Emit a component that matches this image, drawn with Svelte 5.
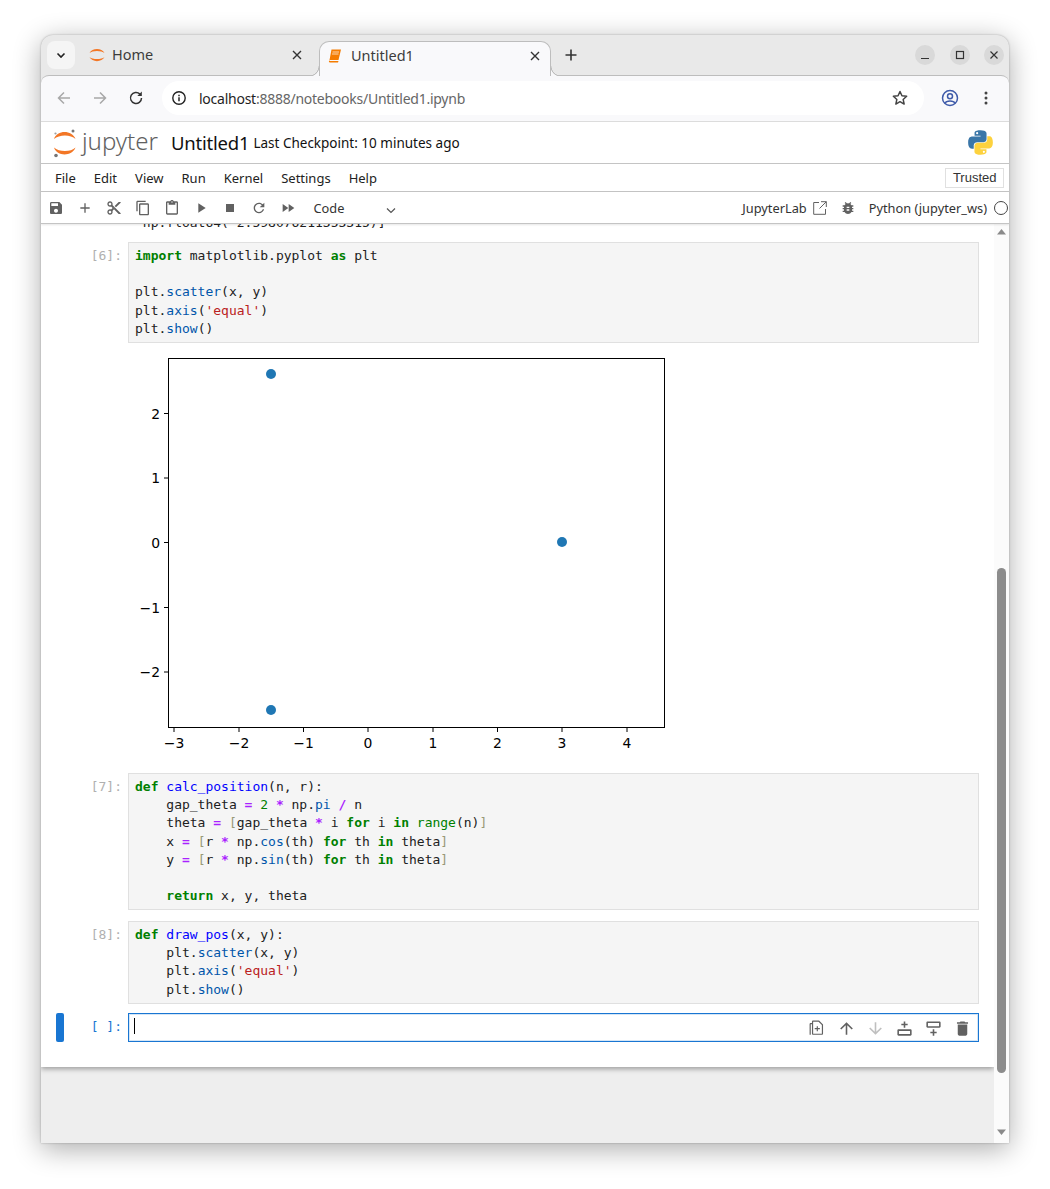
<script>
  const menus = ['File', 'Edit', 'View', 'Run', 'Kernel', 'Settings', 'Help'];
  const tools = [
    'M17 3H5c-1.11 0-2 .9-2 2v14c0 1.1.89 2 2 2h14c1.1 0 2-.9 2-2V7l-4-4zm-5 16c-1.66 0-3-1.34-3-3s1.34-3 3-3 3 1.34 3 3-1.34 3-3 3zm3-10H5V5h10v4z',
    'M19 13h-6v6h-2v-6H5v-2h6V5h2v6h6v2z',
    'M9.64 7.64c.23-.5.36-1.05.36-1.64 0-2.21-1.79-4-4-4S2 3.79 2 6s1.79 4 4 4c.59 0 1.14-.13 1.64-.36L10 12l-2.36 2.36C7.14 14.13 6.59 14 6 14c-2.21 0-4 1.79-4 4s1.79 4 4 4 4-1.79 4-4c0-.59-.13-1.14-.36-1.64L12 14l7 7h3v-1L9.64 7.64zM6 8c-1.1 0-2-.89-2-2s.9-2 2-2 2 .89 2 2-.9 2-2 2zm0 12c-1.1 0-2-.89-2-2s.9-2 2-2 2 .89 2 2-.9 2-2 2zm6-7.5c-.28 0-.5-.22-.5-.5s.22-.5.5-.5.5.22.5.5-.22.5-.5.5zM19 3l-6 6 2 2 7-7V3z',
    'M16 1H4c-1.1 0-2 .9-2 2v14h2V3h12V1zm3 4H8c-1.1 0-2 .9-2 2v14c0 1.1.9 2 2 2h11c1.1 0 2-.9 2-2V7c0-1.1-.9-2-2-2zm0 16H8V7h11v14z',
    'M19 2h-4.18C14.4.84 13.3 0 12 0c-1.3 0-2.4.84-2.82 2H5c-1.1 0-2 .9-2 2v16c0 1.1.9 2 2 2h14c1.1 0 2-.9 2-2V4c0-1.1-.9-2-2-2zm-7 0c.55 0 1 .45 1 1s-.45 1-1 1-1-.45-1-1 .45-1 1-1zm7 18H5V4h2v3h10V4h2v16z',
    'M8 5v14l11-7z',
    'M6 6h12v12H6z',
    'M17.65 6.35C16.2 4.9 14.21 4 12 4c-4.42 0-7.99 3.58-7.99 8s3.57 8 7.99 8c3.73 0 6.84-2.55 7.73-6h-2.08c-.82 2.33-3.04 4-5.65 4-3.31 0-6-2.69-6-6s2.69-6 6-6c1.66 0 3.14.69 4.22 1.78L13 11h7V4l-2.35 2.35z',
    'M4 18l8.5-6L4 6v12zm9-12v12l8.5-6L13 6z'
  ];
  const cellTools = [
    { d: 'M14 2H6.5C5.7 2 5 2.7 5 3.5V5H3.5C2.7 5 2 5.7 2 6.500V20h1.500V6.500H5v12c0 .8.7 1.500 1.500 1.500h11c.8 0 1.500-.7 1.500-1.500V7l-5-5zM6.500 3.500h6.800l4.200 4.200v10.800h-11V3.500zM11 9v2.500H8.500V13H11v2.500h1.500V13H15v-1.500h-2.500V9H11z', o: 1 },
    { d: 'M4 12l1.410 1.410L11 7.830V20h2V7.830l5.580 5.590L20 12l-8-8-8 8z', o: 1 },
    { d: 'M20 12l-1.410-1.410L13 16.170V4h-2v12.170l-5.580-5.590L4 12l8 8 8-8z', o: 0.4 },
    { d: 'M11 3h2v3h3v2h-3v3h-2V8H8V6h3V3zM4.500 13h15c.8 0 1.500.7 1.500 1.500v5c0 .8-.7 1.500-1.500 1.500h-15C3.700 21 3 20.300 3 19.500v-5C3 13.700 3.700 13 4.500 13zM5 15v4h14v-4H5z', o: 1 },
    { d: 'M4.500 3h15c.8 0 1.500.7 1.500 1.500v5c0 .8-.7 1.500-1.500 1.500h-15C3.700 11 3 10.300 3 9.500v-5C3 3.700 3.700 3 4.500 3zM5 5v4h14V5H5zM11 13h2v3h3v2h-3v3h-2v-3H8v-2h3v-3z', o: 1 },
    { d: 'M6 19c0 1.100.9 2 2 2h8c1.100 0 2-.9 2-2V7H6v12zM19 4h-3.500l-1-1h-5l-1 1H5v2h14V4z', o: 1 }
  ];
  const xt = [[174, '−3'], [239, '−2'], [303.5, '−1'], [368, '0'], [433, '1'], [497.5, '2'], [562, '3'], [627, '4']];
  const yt = [[413.500, '2'], [478, '1'], [542.500, '0'], [607.500, '−1'], [672, '−2']];
  const dots = [[271, 374], [562, 542], [271, 710]];
</script>

<div class="page">
  <div class="win">
    <div class="tabstrip">
      <div class="tabsearch"><svg width="12" height="12" viewBox="0 0 12 12"><path d="M2.500 4.500 6 8l3.500-3.500" fill="none" stroke="#222" stroke-width="1.600"/></svg></div>
      <div class="tab home">
        <svg width="18" height="18" viewBox="0 0 18 18"><path d="M1.500 7C4 1.500 14 1.500 16.500 7C13.500 4.200 4.500 4.200 1.500 7zM1.500 11C4 16.500 14 16.500 16.500 11C13.500 13.800 4.500 13.800 1.500 11z" fill="#f37726"/></svg>
        <span class="tabtitle">Home</span>
        <svg class="x" width="12" height="12" viewBox="0 0 12 12"><path d="M2 2l8 8M10 2l-8 8" stroke="#333" stroke-width="1.400"/></svg>
      </div>
      <div class="tab active">
        <svg width="16" height="16" viewBox="0 0 16 16"><path d="M4.500 1.500H14L11.500 12H2.500zM2 12.500C1.600 14 2.300 14.500 3.500 14.500H11L11.500 13H3.200" fill="#f57c00"/><path d="M5.500 4h6.500M5 6h6.500" stroke="#fff" stroke-width=".7"/></svg>
        <span class="tabtitle">Untitled1</span>
        <svg class="x" width="12" height="12" viewBox="0 0 12 12"><path d="M2 2l8 8M10 2l-8 8" stroke="#333" stroke-width="1.400"/></svg>
      </div>
      <svg class="plus" width="14" height="14" viewBox="0 0 14 14"><path d="M7 1.500v11M1.500 7h11" stroke="#333" stroke-width="1.600"/></svg>
      <div class="winbtns">
        <div class="wb"><svg width="10" height="10" viewBox="0 0 10 10"><path d="M1 8.500h8" stroke="#333" stroke-width="1.200"/></svg></div>
        <div class="wb"><svg width="10" height="10" viewBox="0 0 10 10"><rect x="1.500" y="1.500" width="7" height="7" fill="none" stroke="#333" stroke-width="1.200"/></svg></div>
        <div class="wb"><svg width="10" height="10" viewBox="0 0 10 10"><path d="M1.500 1.500l7 7M8.500 1.500l-7 7" stroke="#333" stroke-width="1.200"/></svg></div>
      </div>
    </div>

    <div class="navbar">
      <svg class="nav" width="16" height="16" viewBox="0 0 16 16"><path d="M14 8H2.500M8 2.500 2.500 8 8 13.500" fill="none" stroke="#a8a8a8" stroke-width="1.500"/></svg>
      <svg class="nav" width="16" height="16" viewBox="0 0 16 16"><path d="M2 8h11.500M8 2.500 13.500 8 8 13.500" fill="none" stroke="#a8a8a8" stroke-width="1.500"/></svg>
      <svg class="nav" width="16" height="16" viewBox="0 0 16 16"><path d="M13.500 8A5.500 5.500 0 1 1 11.900 4.100" fill="none" stroke="#333" stroke-width="1.500"/><path d="M13.800 1.500v4.500H9.300z" fill="#333"/></svg>
      <div class="omni">
        <svg width="16" height="16" viewBox="0 0 16 16"><circle cx="8" cy="8" r="6.200" fill="none" stroke="#222" stroke-width="1.400"/><path d="M8 7.200v4M8 4.800v1.400" stroke="#222" stroke-width="1.500"/></svg>
        <span class="url"><span class="host">localhost</span>:8888/notebooks/Untitled1.ipynb</span>
        <svg class="star" width="18" height="18" viewBox="0 0 18 18"><path d="M9 2.500l1.950 4.300 4.700.5-3.500 3.150 1 4.600L9 12.700l-4.150 2.350 1-4.600L2.350 7.300l4.700-.5z" fill="none" stroke="#444" stroke-width="1.500" stroke-linejoin="round"/></svg>
      </div>
      <svg class="prof" width="18" height="18" viewBox="0 0 18 18"><circle cx="9" cy="9" r="7.500" fill="none" stroke="#3f5ba9" stroke-width="1.500"/><circle cx="9" cy="7.200" r="2.500" fill="none" stroke="#3f5ba9" stroke-width="1.500"/><path d="M3.800 14.200C5.500 11.300 12.500 11.300 14.200 14.200" fill="none" stroke="#3f5ba9" stroke-width="1.500"/></svg>
      <svg class="dots" width="4" height="14" viewBox="0 0 4 14"><circle cx="2" cy="2" r="1.500" fill="#444"/><circle cx="2" cy="7" r="1.500" fill="#444"/><circle cx="2" cy="12" r="1.500" fill="#444"/></svg>
    </div>

    <div class="jhead">
      <svg class="jlogo" width="24" height="30" viewBox="0 0 24 30">
        <path d="M1 11C4 1.700 19 1.700 22.500 11C18 6.300 6 6.300 1 11zM1 19.500C4 28.800 19 28.800 22.500 19.500C18 24.200 6 24.200 1 19.500z" fill="#f37726"/>
        <circle cx="20" cy="3" r="1.500" fill="#767677"/><circle cx="2.500" cy="5.500" r="1.100" fill="#9e9e9e"/><circle cx="3" cy="27.500" r="1.800" fill="#767677"/>
      </svg>
      <span class="jword">jupyter</span>
      <span class="nbtitle">Untitled1</span>
      <span class="ckpt">Last Checkpoint: 10 minutes ago</span>
      <svg class="py" width="25" height="25" viewBox="0 0 110 111">
        <path d="M54.900.9C26.900.9 28.600 13 28.600 13v12.600h26.700v3.800H18S.1 27.400.1 55.600s15.600 27.200 15.600 27.200H25V69.700s-.5-15.600 15.400-15.600h26.500s14.900.2 14.900-14.400V15.600S84.100.9 54.900.9zM40.100 9.400a4.800 4.800 0 1 1 0 9.600 4.800 4.800 0 0 1 0-9.600z" fill="#3a76a8"/>
        <path transform="rotate(180 55 55.500)" d="M54.900.9C26.900.9 28.600 13 28.600 13v12.600h26.700v3.800H18S.1 27.400.1 55.600s15.600 27.200 15.600 27.200H25V69.700s-.5-15.600 15.400-15.600h26.500s14.900.2 14.900-14.400V15.600S84.100.9 54.900.9zM40.100 9.400a4.800 4.800 0 1 1 0 9.600 4.800 4.800 0 0 1 0-9.600z" fill="#fdd23e"/>
      </svg>
    </div>

    <div class="menubar">
      {#each menus as m}<span class="mi">{m}</span>{/each}
      <span class="trusted">Trusted</span>
    </div>

    <div class="toolbar">
      {#each tools as d}
        <span class="tbtn"><svg width="16" height="16" viewBox="0 0 24 24"><path {d} fill="#616161"/></svg></span>
      {/each}
      <span class="celltype">Code</span>
      <svg class="chev" width="12" height="12" viewBox="0 0 12 12"><path d="M2 4.500l4 4 4-4" fill="none" stroke="#555" stroke-width="1.200"/></svg>
      <span class="tright">
        <span class="jlab">JupyterLab</span>
        <svg class="ext" width="14" height="14" viewBox="0 0 14 14"><path d="M6 1.500H.7v11.800h11.800V8M8 .7h5.300V6M13.300.7 6.500 7.500" fill="none" stroke="#616161" stroke-width="1"/></svg>
        <svg class="bug" width="16" height="16" viewBox="0 0 24 24"><path d="M20 8h-2.810c-.45-.78-1.070-1.450-1.820-1.960L17 4.410 15.590 3l-2.170 2.170C12.960 5.060 12.490 5 12 5c-.49 0-.96.06-1.410.17L8.410 3 7 4.410l1.620 1.630C7.880 6.550 7.260 7.220 6.810 8H4v2h2.090c-.05.33-.09.66-.09 1v1H4v2h2v1c0 .34.04.67.09 1H4v2h2.810c1.040 1.790 2.970 3 5.190 3s4.150-1.210 5.190-3H20v-2h-2.090c.05-.33.09-.66.09-1v-1h2v-2h-2v-1c0-.34-.04-.67-.09-1H20V8zm-6 8h-4v-2h4v2zm0-4h-4v-2h4v2z" fill="#616161"/></svg>
        <span class="kern">Python (jupyter_ws)</span>
        <span class="kcircle"></span>
      </span>
    </div>

    <div class="body">
      <div class="sheet">
        <pre class="clipline"> np.float64(-2.598076211353315)]</pre>

        <div class="cell">
          <div class="prompt">[6]:</div>
          <pre class="input"><b>import</b> matplotlib.pyplot <b>as</b> plt

plt.<i>scatter</i>(x, y)
plt.<i>axis</i>(<s>'equal'</s>)
plt.<i>show</i>()</pre>
        </div>

        <div class="output">
          <svg width="953" height="420" viewBox="41 343 953 420">
            <rect x="168.500" y="358.500" width="496" height="369" fill="#fff" stroke="#000" stroke-width="1"/>
            {#each xt as [x, t]}
              <path d="M{x} 728v4" stroke="#000" stroke-width="1"/>
              <text class="tick" {x} y="748" text-anchor="middle">{t}</text>
            {/each}
            {#each yt as [y, t]}
              <path d="M164 {y}h4" stroke="#000" stroke-width="1"/>
              <text class="tick" x="160" y={y + 5} text-anchor="end">{t}</text>
            {/each}
            {#each dots as [cx, cy]}
              <circle {cx} {cy} r="5" fill="#1f77b4"/>
            {/each}
          </svg>
        </div>

        <div class="cell c7">
          <div class="prompt">[7]:</div>
          <pre class="input"><b>def</b> <u>calc_position</u>(n, r):
    gap_theta <em>=</em> <q>2</q> <em>*</em> np.<i>pi</i> <em>/</em> n
    theta <em>=</em> <a>[</a>gap_theta <em>*</em> i <b>for</b> i <b>in</b> <q>range</q>(n)<a>]</a>
    x <em>=</em> <a>[</a>r <em>*</em> np.<i>cos</i>(th) <b>for</b> th <b>in</b> theta<a>]</a>
    y <em>=</em> <a>[</a>r <em>*</em> np.<i>sin</i>(th) <b>for</b> th <b>in</b> theta<a>]</a>

    <b>return</b> x, y, theta</pre>
        </div>

        <div class="cell c8">
          <div class="prompt">[8]:</div>
          <pre class="input"><b>def</b> <u>draw_pos</u>(x, y):
    plt.<i>scatter</i>(x, y)
    plt.<i>axis</i>(<s>'equal'</s>)
    plt.<i>show</i>()</pre>
        </div>

        <div class="cell cur">
          <div class="bar"></div>
          <div class="prompt">[ ]:</div>
          <pre class="input"><span class="caret"></span> </pre>
          <div class="celltools">
            {#each cellTools as t}
              <svg width="19" height="19" viewBox="0 0 24 24" style="opacity:{t.o}"><path d={t.d} fill="#616161"/></svg>
            {/each}
          </div>
        </div>
      </div>

      <div class="scroll">
        <svg class="up" width="9" height="6" viewBox="0 0 9 6"><path d="M0 5.500 4.500 0 9 5.500z" fill="#8a8a8a"/></svg>
        <div class="thumb"></div>
        <svg class="down" width="9" height="6" viewBox="0 0 9 6"><path d="M0 .5 4.500 6 9 .5z" fill="#8a8a8a"/></svg>
      </div>
    </div>
  </div>
</div>

<style>
  :global(body) { margin: 0; background: #fff; }
  .page { padding: 35px 41px 46px; width: 968px; height: 1108px; font-family: "Noto Sans", sans-serif; }
  .win {
    width: 968px; height: 1108px; display: flex; flex-direction: column; overflow: hidden;
    border-radius: 12px 12px 0 0; background: #e9e9e9;
    box-shadow: 0 6px 28px rgba(0,0,0,.33), 0 0 2px rgba(0,0,0,.3);
  }
  svg { display: block; flex: none; }

  .tabstrip { height: 40px; flex: none; display: flex; align-items: flex-start; position: relative; }
  .tabsearch { width: 28px; height: 28px; margin: 6px 0 0 6px; border-radius: 8px; background: #f5f5f5; display: flex; align-items: center; justify-content: center; }
  .tab { height: 34px; margin-top: 6px; display: flex; align-items: center; color: #3c3c3c; font-size: 14.500px; }
  .tabtitle { line-height: 20px; margin-top: -2px; }
  .home { width: 244px; padding: 0 0 6px 13px; box-sizing: border-box; gap: 6px; }
  .home .x { margin-left: auto; margin-right: 16px; }
  .active {
    width: 232px; box-sizing: border-box; padding: 0 0 7px 7px; gap: 8px; background: #f9f9fb;
    border: 1px solid #bdbdbd; border-bottom: none; border-radius: 10px 10px 0 0;
    position: relative; z-index: 1; margin-bottom: -1px; height: 35px;
  }
  .active::before, .active::after { content: ""; position: absolute; bottom: 0; width: 10px; height: 10px; }
  .active::before { left: -11px; background: radial-gradient(circle at 0 0, transparent 9.300px, #bdbdbd 9.800px, #bdbdbd 10.300px, #f9f9fb 10.800px); }
  .active::after { right: -11px; background: radial-gradient(circle at 100% 0, transparent 9.300px, #bdbdbd 9.800px, #bdbdbd 10.300px, #f9f9fb 10.800px); }
  .active .x { margin-left: auto; margin-right: 9px; }
  .plus { margin: 13px 0 0 13px; }
  .winbtns { margin-left: auto; display: flex; gap: 14.500px; padding: 10px 5px 0 0; }
  .wb { width: 20px; height: 20px; border-radius: 50%; background: #d9d9d9; display: flex; align-items: center; justify-content: center; }

  .navbar {
    height: 47px; flex: none; box-sizing: border-box; background: #f9f9fb; display: flex; align-items: center;
    border-top: 1px solid #bdbdbd; border-bottom: 1px solid #dcdcdc; border-radius: 8px 8px 0 0; padding: 0 15px 1px 15px;
  }
  .nav { margin-right: 20px; }
  .nav:nth-child(3) { margin-right: 18px; }
  .omni { width: 762px; height: 34px; border-radius: 17px; background: #fff; display: flex; align-items: center; padding: 0 16px 0 9px; box-sizing: border-box; }
  .url { margin-left: 12px; font-size: 14px; color: #666; letter-spacing: -.25px; white-space: pre; }
  .host { color: #1f1f1f; }
  .star { margin-left: auto; margin-right: -1px; }
  .prof { margin-left: 17px; }
  .dots { margin-left: 25px; }

  .jhead { height: 42px; flex: none; box-sizing: border-box; background: #fff; border-bottom: 1px solid #c4c4c4; display: flex; align-items: center; position: relative; padding-left: 12px; }
  .jlogo { margin-right: 5px; }
  .jword { font-family: "Noto Sans", sans-serif; font-size: 24px; color: #616161; letter-spacing: 0; font-weight: 300; margin-top: -4px; line-height: 30px; }
  .nbtitle { font-size: 18.500px; color: #111; margin-left: 13px; letter-spacing: -.2px; }
  .ckpt { font-size: 13.500px; color: #111; margin-left: 4px; }
  .py { margin-left: auto; margin-right: 16px; }

  .menubar { height: 28px; flex: none; box-sizing: border-box; background: #fff; border-bottom: 1px solid #c4c4c4; display: flex; align-items: center; padding-left: 14px; font-size: 13px; color: #222; }
  .mi { margin-right: 18px; }
  .trusted { margin-left: auto; margin-right: 5px; font-family: "Liberation Sans", sans-serif; font-size: 13px; color: #333; border: 1px solid #e0e0e0; height: 18px; line-height: 17px; padding: 0 6.500px; }

  .toolbar { height: 32px; flex: none; box-sizing: border-box; background: #fff; border-bottom: 1px solid #c4c4c4; box-shadow: 0 1px 2px rgba(0,0,0,.1); display: flex; align-items: center; font-size: 12.800px; color: #333; position: relative; z-index: 2; }
  .tbtn { width: 29px; display: flex; justify-content: center; }
  .tbtn:first-child { margin-left: 0.500px; }
  .celltype { margin-left: 11px; }
  .chev { margin-left: 41px; margin-top: 5px; }
  .tright { margin-left: auto; display: flex; align-items: center; }
  .ext { margin-left: 6px; }
  .bug { margin-left: 13px; }
  .kern { margin-left: 13px; }
  .kcircle { width: 12px; height: 12px; border: 1px solid #444; border-radius: 50%; margin-left: 7px; margin-right: 1px; }

  .body { flex: 1; display: flex; min-height: 0; background: #eee; position: relative; }
  .sheet { width: 953px; height: 843px; background: #fff; box-shadow: 0 2px 5px rgba(0,0,0,.35); overflow: hidden; flex: none; }
  pre { margin: 0; font-family: "DejaVu Sans Mono", monospace; font-size: 13px; line-height: 18.200px; }
  .clipline { margin: -10px 0 0 94px; height: 28px; color: #212121; }
  .cell { display: flex; margin: 0 15px 10px 0; position: relative; }
  .c7 { margin-bottom: 10.600px; }
  .c8 { margin-bottom: 9.600px; }
  .prompt { width: 87px; box-sizing: border-box; text-align: right; padding: 5px 6px 0 0; font-family: "DejaVu Sans Mono", monospace; font-size: 13px; line-height: 18.200px; color: #b0b0b0; flex: none; }
  .input { flex: 1; box-sizing: border-box; background: #f5f5f5; border: 1px solid #e0e0e0; padding: 4px 6px; color: #212121; }
  .output { height: 420px; margin-bottom: 10px; margin-top: -10px; }
  .tick { font-family: "DejaVu Sans", sans-serif; font-size: 13.900px; fill: #000; }
  .cur .input { background: #fff; border-color: #1976d2; box-shadow: inset 0 0 0 1px #d5e6f6; }
  .cur .prompt { color: #1976d2; }
  .caret { display: inline-block; width: 1px; height: 16px; background: #000; vertical-align: -3px; margin-left: -1px; }
  .bar { position: absolute; left: 15px; top: 0; bottom: 0; width: 8px; border-radius: 2px; background: #1976d2; }
  .celltools { position: absolute; right: 7.500px; top: 5.500px; display: flex; gap: 10px; }

  b { color: #008000; font-weight: 700; }
  i { font-style: normal; color: #0055aa; }
  u { text-decoration: none; color: #0000ff; }
  s { text-decoration: none; color: #ba2121; }
  em { font-style: normal; color: #aa22ff; font-weight: 700; }
  q { quotes: none; color: #008000; }
  a { color: #999977; }

  .scroll { width: 15px; position: relative; background: #fbfbfb; flex: none; }
  .thumb { position: absolute; left: 3px; width: 9px; top: 344px; height: 505px; border-radius: 5px; background: #8c8c8c; }
  .up { position: absolute; left: 3px; top: 5px; }
  .down { position: absolute; left: 3px; bottom: 8px; }
</style>
